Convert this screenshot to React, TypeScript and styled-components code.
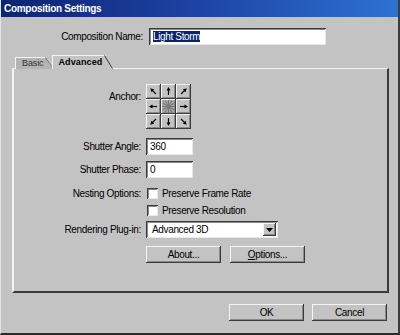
import React from 'react';
import styled, { createGlobalStyle } from 'styled-components';

const GlobalStyle = createGlobalStyle`
  html, body {
    margin: 0;
    padding: 0;
    background: #c3c3c3;
  }
  body {
    font-family: "Liberation Sans", Arial, sans-serif;
    font-size: 10px;
    letter-spacing: -0.35px;
    color: #000;
  }
`;

const raised = `
  background: #c3c3c3;
  box-shadow: inset -1px -1px 0 #3a3a3a, inset 1px 1px 0 #f4f4f4, inset -2px -2px 0 #8a8a8a;
`;

const sunken = `
  background: #fff;
  box-shadow: inset 1px 1px 0 #3a3a3a, inset -1px -1px 0 #e8e8e8, inset 2px 2px 0 #8a8a8a;
`;

const Window = styled.div`
  width: 400px;
  height: 335px;
  box-sizing: border-box;
  display: flex;
  flex-direction: column;
  background: #c3c3c3;
  border-left: 1px solid #e2e2e2;
  border-right: 2px solid #3c3c3c;
  border-bottom: 2px solid #2a2a2a;
`;

const TitleBar = styled.div`
  height: 17px;
  line-height: 17px;
  padding-left: 3px;
  color: #fff;
  font-weight: bold;
  font-size: 10px;
  letter-spacing: -0.3px;
  background: linear-gradient(to right, #0c2470 0%, #1c40a0 45%, #2d72d2 100%);
`;

const Body = styled.div`
  display: flex;
  flex-direction: column;
  padding: 11px 10px 0 11px;
  flex: 1;
`;

const NameRow = styled.div`
  display: grid;
  grid-template-columns: 131px 177px;
  column-gap: 6px;
  align-items: center;
`;

const Label = styled.div`
  text-align: right;
  white-space: nowrap;
`;

const TextInput = styled.div<{ $w: number }>`
  ${sunken}
  width: ${(p) => p.$w}px;
  height: 17px;
  box-sizing: border-box;
  padding: 2px 0 0 4px;
  line-height: 13px;
`;

const Selected = styled.span`
  background: #0a246a;
  color: #fff;
`;

const TabStrip = styled.div`
  display: flex;
  align-items: flex-end;
  height: 13px;
  margin-top: 11px;
  padding-left: 3px;
`;

const Tab = styled.div<{ $active?: boolean }>`
  position: relative;
  height: ${(p) => (p.$active ? 13 : 11)}px;
  line-height: ${(p) => (p.$active ? 13 : 11)}px;
  padding: 0 ${(p) => (p.$active ? 11 : 10)}px 0 6px;
  margin-left: ${(p) => (p.$active ? -2 : 0)}px;
  z-index: ${(p) => (p.$active ? 2 : 1)};
  font-size: 9px;
  letter-spacing: ${(p) => (p.$active ? '0.1px' : '-0.1px')};
  font-weight: ${(p) => (p.$active ? 'bold' : 'normal')};
  color: ${(p) => (p.$active ? '#000' : '#333')};
  background: ${(p) => (p.$active ? '#c3c3c3' : '#b4b4b4')};
  border-top: 1px solid #f4f4f4;
  border-left: 1px solid #f4f4f4;
  clip-path: polygon(0 0, calc(100% - 8px) 0, 100% 100%, 0 100%);
`;

const TabSlant = styled.svg`
  position: absolute;
  right: 0;
  top: -1px;
`;

const Panel = styled.div`
  height: 225px;
  box-sizing: border-box;
  width: 377px;
  border-top: 1px solid #f4f4f4;
  border-left: 2px solid #f4f4f4;
  border-right: 2px solid #3a3a3a;
  border-bottom: 2px solid #3a3a3a;
  padding-top: 15px;
  margin-top: -1px;
  display: flex;
  flex-direction: column;
`;

const Row = styled.div<{ $mt?: number }>`
  display: grid;
  grid-template-columns: 127px 1fr;
  column-gap: 5px;
  align-items: center;
  margin-top: ${(p) => p.$mt ?? 0}px;
`;

const TopLabel = styled(Label)`
  align-self: start;
  padding-top: 7px;
`;

const AnchorGrid = styled.div`
  display: grid;
  grid-template-columns: repeat(3, 15px);
  grid-template-rows: repeat(3, 15px);
  width: 45px;
  background: #8a8a8a;
`;

const AnchorCell = styled.div<{ $center?: boolean }>`
  ${raised}
  background: ${(p) => (p.$center ? '#a6a6a6' : '#c3c3c3')};
  display: flex;
  align-items: center;
  justify-content: center;
`;

const Checks = styled.div`
  display: flex;
  align-items: center;
  gap: 4px;
  padding-left: 1px;
`;

const CheckBox = styled.div`
  ${sunken}
  width: 11px;
  height: 11px;
`;

const Select = styled.div`
  ${sunken}
  width: 132px;
  height: 17px;
  box-sizing: border-box;
  display: flex;
  align-items: center;
  padding: 2px 2px 2px 6px;
`;

const SelectText = styled.span`
  flex: 1;
`;

const DropButton = styled.div`
  ${raised}
  width: 13px;
  height: 13px;
  display: flex;
  align-items: center;
  justify-content: center;
`;

const ButtonRow = styled.div`
  display: flex;
  gap: 9px;
`;

const Button = styled.div`
  ${raised}
  width: 75px;
  height: 17px;
  line-height: 17px;
  text-align: center;
  box-sizing: border-box;
`;

const Footer = styled.div`
  display: flex;
  justify-content: flex-end;
  gap: 8px;
  margin-top: 11px;
  padding-right: 1px;
`;

const Arrow = ({ angle }: { angle: number }) => (
  <svg width="13" height="13" viewBox="0 0 13 13">
    <g transform={`rotate(${angle} 6.5 6.5)`}>
      <line x1="6.5" y1="10" x2="6.5" y2="4.5" stroke="#000" strokeWidth="1.2" />
      <polygon points="6.5,2 4.5,5.5 8.5,5.5" fill="#000" />
    </g>
  </svg>
);

const Burst = () => (
  <svg width="13" height="13" viewBox="0 0 13 13">
    {[0, 30, 60, 90, 120, 150, 180, 210, 240, 270, 300, 330].map((a) => (
      <line key={a} x1="6.5" y1="6.5" x2="6.5" y2="0" stroke="#7a7a7a" strokeWidth="1" transform={`rotate(${a} 6.5 6.5)`} />
    ))}
  </svg>
);

const anchorAngles = [-45, 0, 45, -90, null, 90, -135, 180, 135];

export default function App() {
  return (
    <Window>
      <GlobalStyle />
      <TitleBar>Composition Settings</TitleBar>
      <Body>
        <NameRow>
          <Label>Composition Name:</Label>
          <TextInput $w={177}>
            <Selected>Light Storm</Selected>
          </TextInput>
        </NameRow>

        <TabStrip>
          <Tab>
            Basic
            <TabSlant width="9" height="12" viewBox="0 0 9 12">
              <line x1="0.5" y1="0.5" x2="8.5" y2="11.5" stroke="#555" />
            </TabSlant>
          </Tab>
          <Tab $active>
            Advanced
            <TabSlant width="9" height="14" viewBox="0 0 9 14">
              <line x1="0.5" y1="0.5" x2="8.5" y2="13.5" stroke="#333" />
            </TabSlant>
          </Tab>
        </TabStrip>

        <Panel>
          <Row>
            <TopLabel>Anchor:</TopLabel>
            <AnchorGrid>
              {anchorAngles.map((a, i) => (
                <AnchorCell key={i} $center={a === null}>
                  {a === null ? <Burst /> : <Arrow angle={a} />}
                </AnchorCell>
              ))}
            </AnchorGrid>
          </Row>
          <Row $mt={9}>
            <Label>Shutter Angle:</Label>
            <TextInput $w={47}>360</TextInput>
          </Row>
          <Row $mt={6}>
            <Label>Shutter Phase:</Label>
            <TextInput $w={47}>0</TextInput>
          </Row>
          <Row $mt={10}>
            <Label>Nesting Options:</Label>
            <Checks>
              <CheckBox />
              Preserve Frame Rate
            </Checks>
          </Row>
          <Row $mt={6}>
            <span />
            <Checks>
              <CheckBox />
              Preserve Resolution
            </Checks>
          </Row>
          <Row $mt={5}>
            <Label>Rendering Plug-in:</Label>
            <Select>
              <SelectText>Advanced 3D</SelectText>
              <DropButton>
                <svg width="7" height="4" viewBox="0 0 7 4">
                  <polygon points="0,0 7,0 3.5,4" fill="#000" />
                </svg>
              </DropButton>
            </Select>
          </Row>
          <Row $mt={8}>
            <span />
            <ButtonRow>
              <Button>About...</Button>
              <Button>
                <u>O</u>ptions...
              </Button>
            </ButtonRow>
          </Row>
        </Panel>

        <Footer>
          <Button>OK</Button>
          <Button>Cancel</Button>
        </Footer>
      </Body>
    </Window>
  );
}
